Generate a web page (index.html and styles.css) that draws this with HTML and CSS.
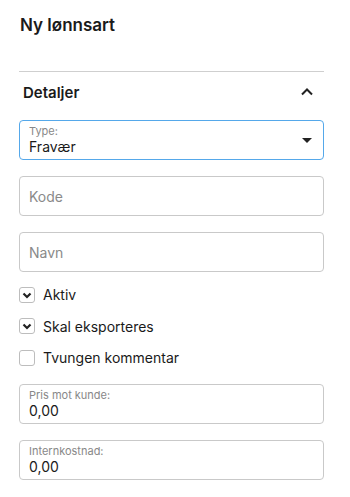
FILE: index.html
```html
<!DOCTYPE html>
<html lang="no">
<head>
  <meta charset="UTF-8">
  <title>Ny lønnsart</title>
  <link rel="stylesheet" href="styles.css">
</head>
<body>

<div class="panel">
  <h1 class="title">Ny lønnsart</h1>

  <div class="section-head">
    <span>Detaljer</span>
    <svg class="chevron" width="14" height="10" viewBox="0 0 14 10">
      <path d="M2 7.5 L7 2.5 L12 7.5" fill="none" stroke="#222" stroke-width="2"/>
    </svg>
  </div>

  <div class="field field-select">
    <div class="field-text">
      <span class="small-label">Type:</span>
      <span class="value">Fravær</span>
    </div>
    <span class="caret"></span>
  </div>

  <div class="field">
    <span class="placeholder">Kode</span>
  </div>

  <div class="field">
    <span class="placeholder">Navn</span>
  </div>

  <div class="checks">
    <label class="check-row">
      <span class="box checked">
        <svg width="10" height="8" viewBox="0 0 10 8"><path d="M1.5 2.5 L5 6 L8.5 2.5" fill="none" stroke="#222" stroke-width="2.2"/></svg>
      </span>
      Aktiv
    </label>
    <label class="check-row">
      <span class="box checked">
        <svg width="10" height="8" viewBox="0 0 10 8"><path d="M1.5 2.5 L5 6 L8.5 2.5" fill="none" stroke="#222" stroke-width="2.2"/></svg>
      </span>
      Skal eksporteres
    </label>
    <label class="check-row">
      <span class="box"></span>
      Tvungen kommentar
    </label>
  </div>

  <div class="field field-num">
    <div class="field-text">
      <span class="small-label">Pris mot kunde:</span>
      <span class="value">0,00</span>
    </div>
  </div>

  <div class="field field-num">
    <div class="field-text">
      <span class="small-label">Internkostnad:</span>
      <span class="value">0,00</span>
    </div>
  </div>
</div>

</body>
</html>
```

FILE: styles.css
```css
body {
  margin: 0;
  font-family: Inter, "Noto Sans", sans-serif;
  color: #1a1a1a;
  background: #fff;
}

.panel {
  width: 305px;
  margin-left: 19px;
}

.title {
  margin: 0;
  padding: 15px 0 0 1px;
  height: 56px;
  font-size: 17px;
  line-height: 20px;
  font-weight: 600;
  border-bottom: 1px solid #cfcfcf;
}

.section-head {
  display: flex;
  justify-content: space-between;
  align-items: center;
  height: 40px;
  padding: 0 10px 0 4px;
  margin-bottom: 8px;
  font-size: 15px;
  font-weight: 600;
}

.field {
  box-sizing: border-box;
  height: 40px;
  border: 1px solid #c9c9c9;
  border-radius: 4px;
  margin-bottom: 16px;
  padding: 0 9px;
  display: flex;
  align-items: center;
}

.field-select {
  border-color: #55a8ea;
  justify-content: space-between;
}

.field-text {
  display: flex;
  flex-direction: column;
}

.small-label {
  font-size: 11px;
  line-height: 13px;
  color: #888;
}

.value {
  font-size: 14px;
  line-height: 17px;
  color: #1a1a1a;
}

.caret {
  width: 0;
  height: 0;
  border-left: 5px solid transparent;
  border-right: 5px solid transparent;
  border-top: 5px solid #222;
  margin-right: 2px;
}

.placeholder {
  font-size: 14px;
  color: #8a8a8a;
}

.checks {
  margin-top: -9px;
  margin-bottom: 10px;
}

.check-row {
  display: flex;
  align-items: center;
  height: 31.5px;
  font-size: 14px;
  gap: 8px;
}

.box {
  box-sizing: border-box;
  width: 16px;
  height: 16px;
  border: 1px solid #bdbdbd;
  border-radius: 3px;
  display: flex;
  align-items: center;
  justify-content: center;
}
```
